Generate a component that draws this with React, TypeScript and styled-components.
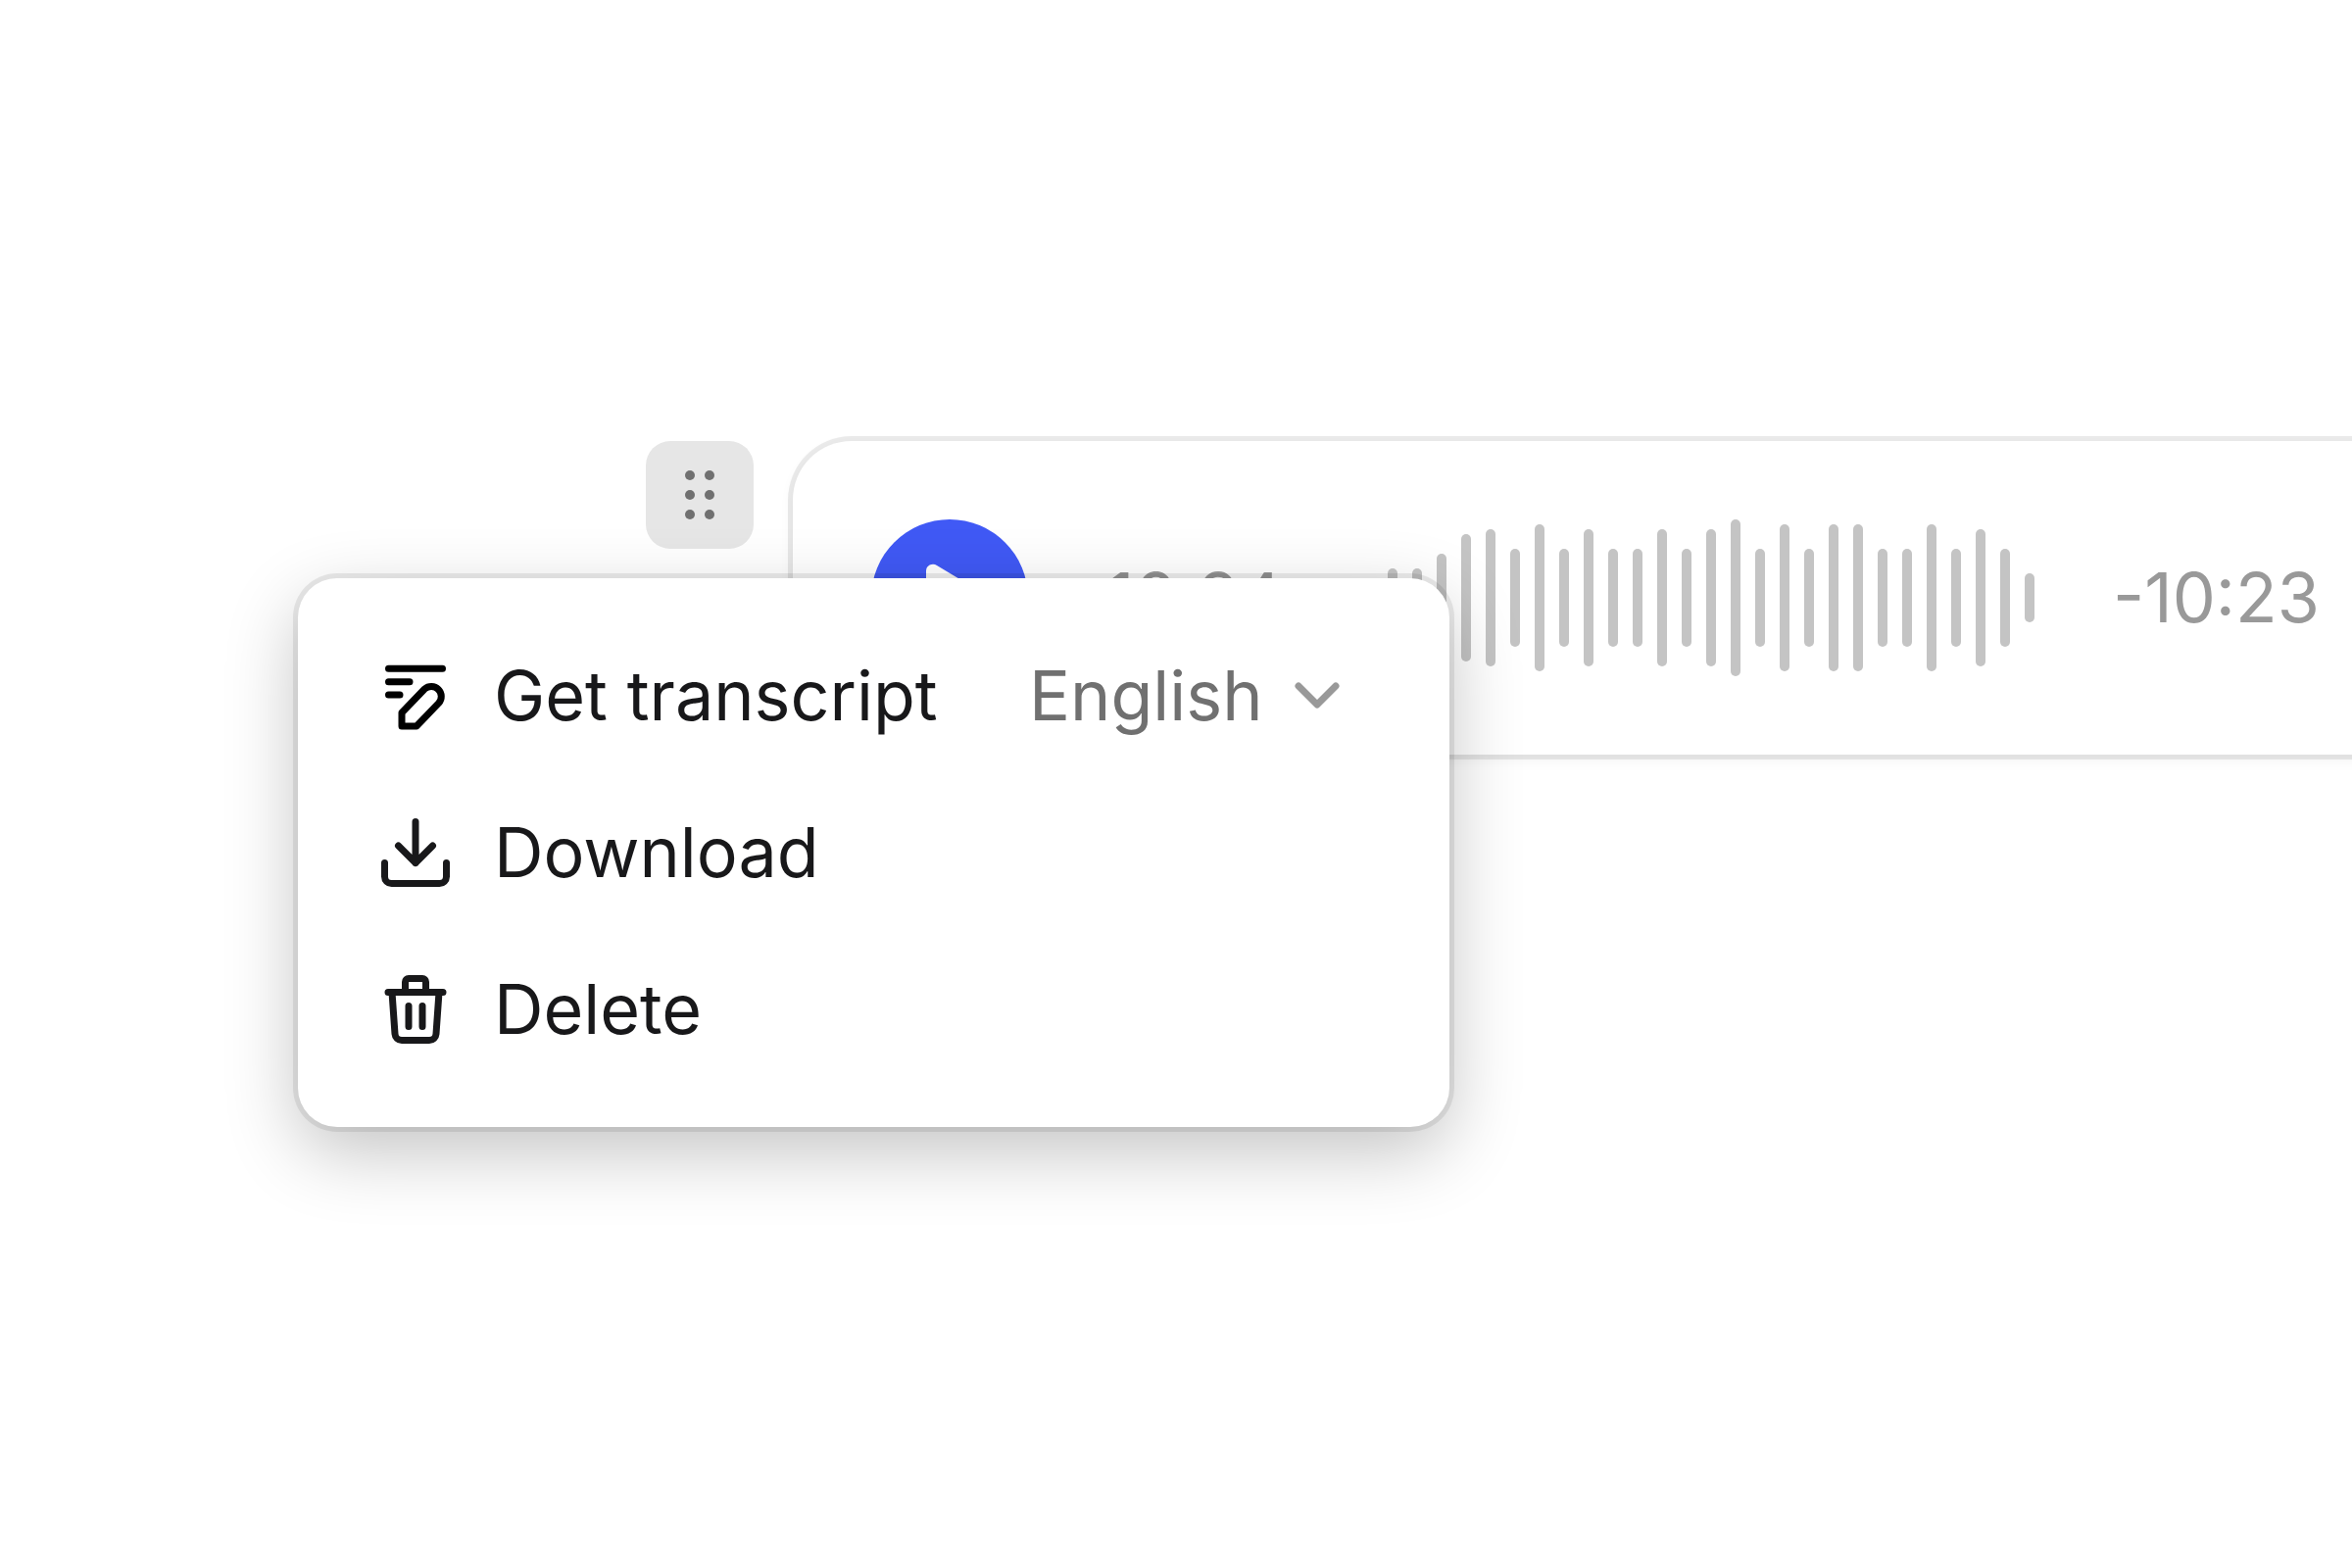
import React from "react";
import styled, { createGlobalStyle } from "styled-components";

const GlobalStyle = createGlobalStyle`
  *, *::before, *::after { box-sizing: border-box; }
  body {
    margin: 0;
    background: #fff;
    overflow-x: hidden;
    font-family: Inter, "Liberation Sans", sans-serif;
    font-size: 70px;
    line-height: 100px;
    color: #18181a;
  }
  button, select { font: inherit; color: inherit; }
`;

const Stage = styled.main`
  min-height: 100vh;
  padding: 450px 0 0 659px;
  overflow: hidden;
`;

const Block = styled.div`
  position: relative;
  display: flex;
  align-items: flex-start;
  gap: 40px;
`;

const DragHandle = styled.button`
  flex: none;
  display: grid;
  place-items: center;
  width: 110px;
  height: 110px;
  padding: 0;
  border: 0;
  border-radius: 25px;
  background: #e6e6e6;
`;

const Player = styled.section`
  flex: 1 0 auto;
  display: flex;
  align-items: center;
  gap: 80px;
  padding: 80px 160px 80px 80px;
  border-radius: 60px;
  background: #fff;
  box-shadow: 0 0 0 5px rgba(0, 0, 0, 0.08), 0 5px 15px rgba(0, 0, 0, 0.06);
`;

const PlayButton = styled.button`
  display: grid;
  place-items: center;
  width: 160px;
  height: 160px;
  padding: 0;
  border: 0;
  border-radius: 50%;
  background: #4059f5;
`;

const Time = styled.time`
  min-width: 207px;
  color: #999;
`;

const Waveform = styled.svg`
  display: block;
  flex: none;
`;

const Menu = styled.div`
  position: absolute;
  top: 140px;
  left: -355px;
  width: 1175px;
  padding: 40px 0;
  border-radius: 40px;
  background: #fff;
  box-shadow: 0 0 0 5px rgba(0, 0, 0, 0.08), 0 25px 75px rgba(0, 0, 0, 0.24);
`;

const MenuRow = styled.div`
  display: flex;
  align-items: center;
  height: 160px;
  padding: 0 80px;
`;

const MenuAction = styled.button`
  display: flex;
  align-items: center;
  gap: 40px;
  padding: 0;
  border: 0;
  background: none;
  white-space: nowrap;
`;

const Icon = styled.svg`
  flex: none;
  display: block;
  fill: none;
  stroke: currentColor;
  stroke-width: 7;
  stroke-linecap: round;
  stroke-linejoin: round;
`;

const PenIcon = styled(Icon)`
  color: #000;
`;

const LanguagePicker = styled.label`
  display: grid;
  align-items: center;
  margin-left: auto;
  color: #707070;
`;

const LanguageSelect = styled.select`
  grid-area: 1 / 1;
  appearance: none;
  height: 100px;
  padding: 0 110px 0 0;
  border: 0;
  background: none;
`;

const Chevron = styled(Icon)`
  grid-area: 1 / 1;
  justify-self: end;
  color: #999;
  pointer-events: none;
`;

const BAR_HEIGHTS = [
  60, 60, 90, 130, 140, 100, 150, 100, 140, 100, 100, 140, 100, 140,
  160, 100, 150, 100, 150, 150, 100, 100, 150, 100, 140, 100, 50,
];
const BAR_WIDTH = 10;
const BAR_STEP = 25;
const WAVE_WIDTH = (BAR_HEIGHTS.length - 1) * BAR_STEP + BAR_WIDTH;

export default function App() {
  return (
    <>
      <GlobalStyle />
      <Stage>
        <Block>
          <DragHandle type="button" aria-label="Block options">
            <svg width="30" height="50" viewBox="0 0 30 50" fill="#707070" aria-hidden="true">
              {[5, 25, 45].map((y) => (
                <React.Fragment key={y}>
                  <circle cx="5" cy={y} r="5" />
                  <circle cx="25" cy={y} r="5" />
                </React.Fragment>
              ))}
            </svg>
          </DragHandle>

          <Player aria-label="Audio player">
            <PlayButton type="button" aria-label="Play">
              <svg width="80" height="80" viewBox="0 0 80 80" fill="#fff" aria-hidden="true">
                <path d="M16 13a7 7 0 0 1 11-6l45 27a7 7 0 0 1 0 12L27 73a7 7 0 0 1-11-6Z" />
              </svg>
            </PlayButton>
            <Time>10:24</Time>
            <Waveform
              width={WAVE_WIDTH}
              height="160"
              viewBox={`0 0 ${WAVE_WIDTH} 160`}
              fill="#c4c4c4"
              aria-hidden="true"
            >
              {BAR_HEIGHTS.map((h, i) => (
                <rect key={i} x={i * BAR_STEP} y={80 - h / 2} width={BAR_WIDTH} height={h} rx="5" />
              ))}
            </Waveform>
            <Time>-10:23</Time>
          </Player>

          <Menu>
            <MenuRow>
              <MenuAction type="button">
                <PenIcon width="80" height="80" viewBox="0 0 80 80" aria-hidden="true">
                  <path d="M12.5 12.3h55M12.5 25.8H34M12.5 39H24" />
                  <path d="M26 71V57.2L49.3 33a10.2 10.2 0 0 1 14.4 14.4L41 71Z" />
                </PenIcon>
                Get transcript
              </MenuAction>
              <LanguagePicker>
                <LanguageSelect aria-label="Transcript language" defaultValue="English">
                  <option>English</option>
                </LanguageSelect>
                <Chevron width="110" height="80" viewBox="0 0 110 80" aria-hidden="true">
                  <path d="M36 30l19 19 19-19" />
                </Chevron>
              </LanguagePicker>
            </MenuRow>
            <MenuRow>
              <MenuAction type="button">
                <Icon width="80" height="80" viewBox="0 0 80 80" aria-hidden="true">
                  <path d="M40 8.5v42M22.5 33L40 50.5 57.5 33" />
                  <path d="M8.5 50.5v14a7 7 0 0 0 7 7h49a7 7 0 0 0 7-7v-14" />
                </Icon>
                Download
              </MenuAction>
            </MenuRow>
            <MenuRow>
              <MenuAction type="button">
                <Icon width="80" height="80" viewBox="0 0 80 80" aria-hidden="true">
                  <path d="M12 22.5h56M29.5 22.5V12a3.5 3.5 0 0 1 3.5-3.5h14a3.5 3.5 0 0 1 3.5 3.5v10.5" />
                  <path d="M16 22.5l3 42.5a7 7 0 0 0 7 6.5h28a7 7 0 0 0 7-6.5l3-42.5M33 36.5v21M47 36.5v21" />
                </Icon>
                Delete
              </MenuAction>
            </MenuRow>
          </Menu>
        </Block>
      </Stage>
    </>
  );
}
